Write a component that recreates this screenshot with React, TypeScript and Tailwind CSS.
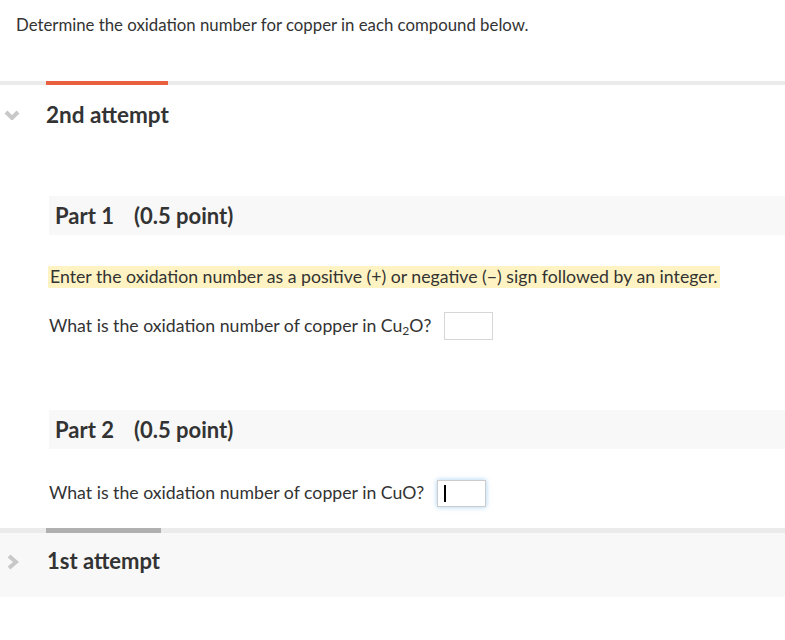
import React from 'react';

const font = { fontFamily: 'Lato, "Open Sans", sans-serif' };

const ChevronDown = () => (
  <svg width="16" height="10" viewBox="0 0 16 10" className="shrink-0">
    <polyline points="2,2 8,8 14,2" fill="none" stroke="#c8c8c8" strokeWidth="4" />
  </svg>
);

const ChevronRight = () => (
  <svg width="12" height="16" viewBox="0 0 12 16" className="shrink-0">
    <polyline points="2,2 9,8 2,14" fill="none" stroke="#c8c8c8" strokeWidth="4" />
  </svg>
);

const PartHeader = ({ n }: { n: number }) => (
  <div className="ml-[49px] h-[39px] bg-[#f8f8f8] flex items-center pl-[6px] text-[22px] font-bold text-[#333]">
    <span>Part {n}</span>
    <span className="ml-[20px]">(0.5 point)</span>
  </div>
);

export default function App() {
  return (
    <div className="w-[785px] h-[640px] bg-white text-[#333] overflow-hidden" style={font}>
      <div className="pl-[16px] pt-[13px] h-[37px] text-[16.8px] leading-[24px]">
        Determine the oxidation number for copper in each compound below.
      </div>

      {/* 2nd attempt */}
      <div className="mt-[44px] h-[4px] bg-[#ebebeb]">
        <div className="ml-[46px] w-[122px] h-full bg-[#e9603e]" />
      </div>
      <div className="h-[60px] flex items-center">
        <div className="w-[46px] pl-[4px] flex items-center">
          <ChevronDown />
        </div>
        <span className="text-[22.5px] font-bold">2nd attempt</span>
      </div>

      <div className="mt-[51px]">
        <PartHeader n={1} />
        <div className="ml-[48px] mt-[31px] h-[22px] flex">
          <span className="bg-[#fff3c4] px-[2px] text-[17.7px] leading-[22px] whitespace-nowrap">
            Enter the oxidation number as a positive (+) or negative (−) sign followed by an integer.
          </span>
        </div>
        <div className="ml-[49px] mt-[24px] h-[28px] flex items-center gap-[13px] text-[17.7px]">
          <span>
            What is the oxidation number of copper in Cu<span className="text-[12px] relative top-[3px]">2</span>O?
          </span>
          <input
            type="text"
            className="w-[49px] h-[28px] border border-[#d6d6d6] bg-white outline-none"
          />
        </div>
      </div>

      <div className="mt-[70px]">
        <PartHeader n={2} />
        <div className="ml-[49px] mt-[31px] h-[27px] flex items-center gap-[13px] text-[17.7px]">
          <span>What is the oxidation number of copper in CuO?</span>
          <div className="w-[49px] h-[27px] border border-[#cccccc] bg-white shadow-[0_0_5px_rgba(102,175,233,0.6)] flex items-center pl-[6px]">
            <div className="w-[1.5px] h-[17px] bg-black" />
          </div>
        </div>
      </div>

      {/* 1st attempt */}
      <div className="mt-[21px] h-[5px] bg-[#ebebeb]">
        <div className="ml-[46px] w-[115px] h-full bg-[#b0b0b0]" />
      </div>
      <div className="h-[64px] bg-[#f8f8f8] flex items-start pt-[14px]">
        <div className="w-[47px] pl-[7px] pt-[7px] flex items-center">
          <ChevronRight />
        </div>
        <span className="text-[22px] font-bold leading-[28px]">1st attempt</span>
      </div>
    </div>
  );
}
